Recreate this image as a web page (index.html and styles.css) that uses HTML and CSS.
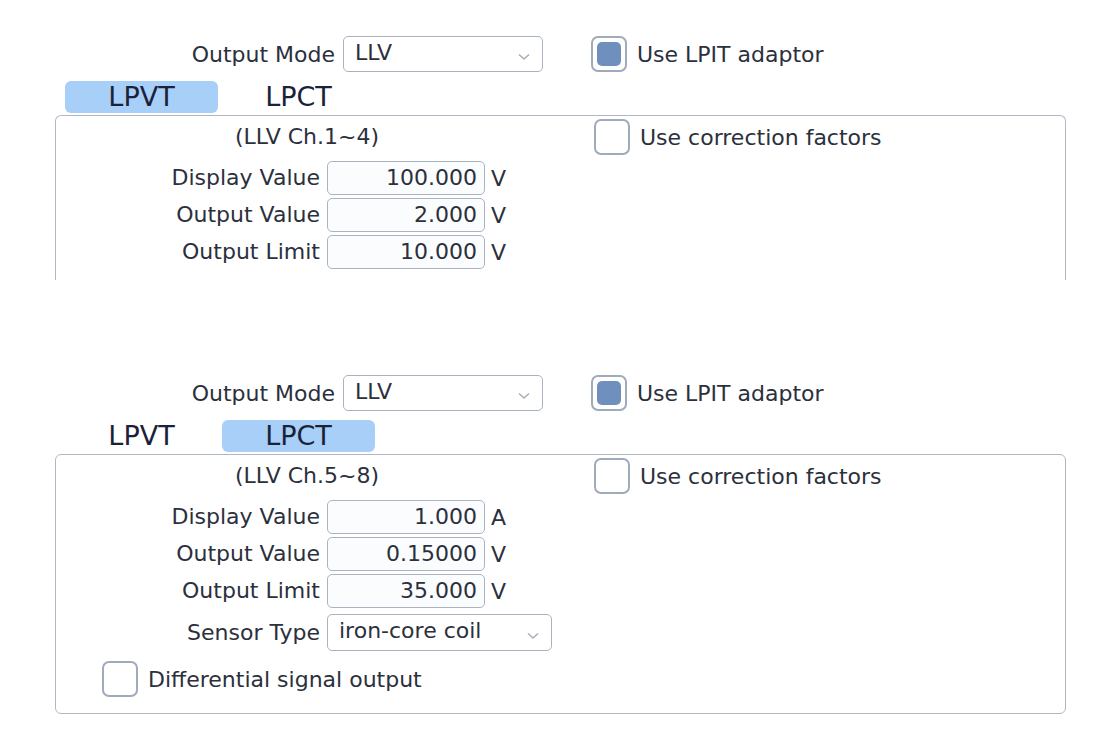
FILE: index.html
```html
<!DOCTYPE HTML>
<html lang="en">
  <head>
    <meta charset="utf-8">
    <title>LPIT Output Settings</title>
    <link rel="stylesheet" href="styles.css">
  </head>
  <body>

  <div class="config">
    <div class="mode-row">
      <span class="mode-label">Output Mode</span>
      <div class="select mode-select"><span>LLV</span><svg class="chev" viewBox="0 0 12 8"><path d="M1 1.5 L6 6 L11 1.5"/></svg></div>
      <label class="check"><span class="box checked"></span> Use LPIT adaptor</label>
    </div>
    <div class="tabs">
      <span class="tab active">LPVT</span>
      <span class="tab">LPCT</span>
    </div>
    <div class="panel cut">
      <div class="form">
        <div class="caption">(LLV Ch.1~4)</div>
        <div class="rows">
          <span class="lbl">Display Value</span><span class="field">100.000</span><span class="unit">V</span>
          <span class="lbl">Output Value</span><span class="field">2.000</span><span class="unit">V</span>
          <span class="lbl">Output Limit</span><span class="field">10.000</span><span class="unit">V</span>
        </div>
      </div>
      <label class="check"><span class="box"></span> Use correction factors</label>
    </div>
  </div>

  <div class="config second">
    <div class="mode-row">
      <span class="mode-label">Output Mode</span>
      <div class="select mode-select"><span>LLV</span><svg class="chev" viewBox="0 0 12 8"><path d="M1 1.5 L6 6 L11 1.5"/></svg></div>
      <label class="check"><span class="box checked"></span> Use LPIT adaptor</label>
    </div>
    <div class="tabs">
      <span class="tab">LPVT</span>
      <span class="tab active">LPCT</span>
    </div>
    <div class="panel">
      <div class="form">
        <div class="caption">(LLV Ch.5~8)</div>
        <div class="rows">
          <span class="lbl">Display Value</span><span class="field">1.000</span><span class="unit">A</span>
          <span class="lbl">Output Value</span><span class="field">0.15000</span><span class="unit">V</span>
          <span class="lbl">Output Limit</span><span class="field">35.000</span><span class="unit">V</span>
          <span class="lbl sensor-lbl">Sensor Type</span>
          <div class="select sensor-select"><span>iron-core coil</span><svg class="chev" viewBox="0 0 12 8"><path d="M1 1.5 L6 6 L11 1.5"/></svg></div>
        </div>
        <label class="check diff"><span class="box"></span> Differential signal output</label>
      </div>
      <label class="check"><span class="box"></span> Use correction factors</label>
    </div>
  </div>

  </body>
</html>
```

FILE: styles.css
```css
html {
  height: 100%;
}
body {
  margin: 0;
  padding: 36px 0 0 55px;
  background: #ffffff;
  color: #2b303c;
  font-family: "DejaVu Sans", sans-serif;
  font-size: 22px;
  width: 1011px;
}
.config.second {
  margin-top: 95px;
}
.mode-row {
  display: flex;
  align-items: center;
  height: 36px;
}
.mode-label {
  width: 280px;
  text-align: right;
}
.select {
  display: flex;
  align-items: center;
  justify-content: space-between;
  box-sizing: border-box;
  border: 1px solid #a9b3c0;
  border-radius: 5px;
  background: #ffffff;
  padding: 0 12px 0 11px;
}
.mode-select {
  margin-left: 8px;
  width: 200px;
  height: 36px;
}
.mode-select span {
  margin-bottom: 3px;
}
.chev {
  width: 12px;
  height: 8px;
  margin-top: 6px;
}
.chev path {
  fill: none;
  stroke: #a8b0bb;
  stroke-width: 1.6;
}
.check {
  display: flex;
  align-items: center;
  height: 36px;
}
.mode-row .check {
  margin-left: 48px;
}
.box {
  box-sizing: border-box;
  width: 36px;
  height: 36px;
  border: 2px solid #9eabbb;
  border-radius: 7px;
  margin-right: 10px;
  background: #ffffff;
  position: relative;
}
.box.checked::after {
  content: "";
  position: absolute;
  left: 4px;
  top: 4px;
  right: 4px;
  bottom: 4px;
  border-radius: 5px;
  background: #6f90bf;
}
.tabs {
  display: flex;
  gap: 4px;
  margin: 9px 0 2px 10px;
}
.tab {
  width: 153px;
  height: 32px;
  line-height: 32px;
  text-align: center;
  font-size: 27px;
  color: #1b2238;
  border-radius: 6px;
}
.tab.active {
  background: #a8cff7;
}
.panel {
  display: flex;
  box-sizing: border-box;
  border: 1px solid #b0b8c4;
  border-radius: 6px;
  padding: 3px 0 16px 0;
}
.panel.cut {
  height: 165px;
  border-bottom: none;
  border-radius: 6px 6px 0 0;
  padding-bottom: 0;
}
.form {
  width: 502px;
  margin-right: 36px;
}
.caption {
  text-align: center;
  height: 36px;
  line-height: 36px;
  margin-bottom: 6px;
}
.rows {
  display: grid;
  grid-template-columns: 264px 158px auto;
  column-gap: 7px;
  row-gap: 3px;
  align-items: center;
}
.lbl {
  text-align: right;
  line-height: 34px;
}
.field {
  box-sizing: border-box;
  height: 34px;
  line-height: 32px;
  border: 1px solid #aab4c1;
  border-radius: 5px;
  background: #fbfcfd;
  text-align: right;
  padding-right: 7px;
}
.unit {
  margin-left: -1px;
}
.sensor-lbl {
  margin-top: 3px;
}
.sensor-select {
  grid-column: 2 / 4;
  width: 225px;
  height: 37px;
  margin-top: 3px;
}
.sensor-select span {
  margin-bottom: 5px;
}
.check.diff {
  margin: 10px 0 0 46px;
}
```
